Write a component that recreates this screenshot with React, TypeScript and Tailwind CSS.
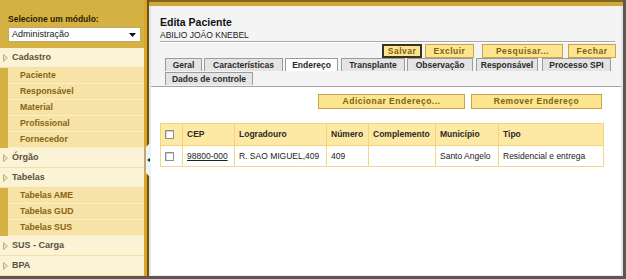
import React from 'react';
import clsx from 'clsx';

type MenuGroup = { title: string; items: string[] };

const menu: MenuGroup[] = [
  { title: 'Cadastro', items: ['Paciente', 'Responsável', 'Material', 'Profissional', 'Fornecedor'] },
  { title: 'Órgão', items: [] },
  { title: 'Tabelas', items: ['Tabelas AME', 'Tabelas GUD', 'Tabelas SUS'] },
  { title: 'SUS - Carga', items: [] },
  { title: 'BPA', items: [] },
];

const topButtons = [
  { label: 'Salvar', w: 'w-[40px]', ml: 'ml-0', focus: true },
  { label: 'Excluir', w: 'w-[49px]', ml: 'ml-[3px]', focus: false },
  { label: 'Pesquisar...', w: 'w-[81px]', ml: 'ml-[8px]', focus: false },
  { label: 'Fechar', w: 'w-[48px]', ml: 'ml-[5px]', focus: false },
];

const tabs = [
  { label: 'Geral', w: 'w-[37px]', ml: 'ml-0' },
  { label: 'Características', w: 'w-[79px]', ml: 'ml-[2px]' },
  { label: 'Endereço', w: 'w-[53px]', ml: 'ml-[2px]', active: true },
  { label: 'Transplante', w: 'w-[64px]', ml: 'ml-[3px]' },
  { label: 'Observação', w: 'w-[66px]', ml: 'ml-[2px]' },
  { label: 'Responsável', w: 'w-[62px]', ml: 'ml-[3px]' },
  { label: 'Processo SPI', w: 'w-[69px]', ml: 'ml-[4px]' },
];

const cols = [
  { key: 'chk', label: '', w: 'w-[22px]' },
  { key: 'cep', label: 'CEP', w: 'w-[52px]' },
  { key: 'log', label: 'Logradouro', w: 'w-[92px]' },
  { key: 'num', label: 'Número', w: 'w-[42px]' },
  { key: 'comp', label: 'Complemento', w: 'w-[67px]' },
  { key: 'mun', label: 'Município', w: 'w-[63px]' },
  { key: 'tipo', label: 'Tipo', w: 'w-[105px]' },
];

function Arrow() {
  return (
    <svg width="5" height="8" viewBox="0 0 5 8" className="shrink-0">
      <polygon points="0.5,0.5 4.5,4 0.5,7.5" fill="#e6e0b4" stroke="#bdb482" strokeWidth="1" />
    </svg>
  );
}

function Checkbox() {
  return <span className="block size-[9px] border border-[#8f8f8f] bg-white shadow-[inset_1px_1px_0_#d0d0d0]" />;
}

function Sidebar() {
  return (
    <aside className="relative flex w-[149px] shrink-0">
      <div className="flex w-[144px] flex-col bg-[#d5b043]">
        <div className="h-[48px] pl-[8px] pr-[3px] pt-[14px]">
          <div className="text-[8.5px] font-bold leading-[11px] text-[#2b1f00]">Selecione um módulo:</div>
          <div className="mt-[2px] flex h-[15px] items-center justify-between border border-[#c2a862] bg-white pl-[3px] pr-[4px] text-[9px] text-[#222]">
            <span>Administração</span>
            <svg width="7" height="4" viewBox="0 0 7 4">
              <polygon points="0,0 7,0 3.5,4" fill="#111" />
            </svg>
          </div>
        </div>
        <ul className="flex flex-1 flex-col bg-[#fcf3d6]">
          {menu.map((group) => (
            <li key={group.title} className="list-none">
              <div className="flex h-[20px] items-center gap-[4px] border-b border-[#f1e0a8] bg-[#fcf3d6] pl-[3px] text-[9px] font-bold text-[#57523f]">
                <Arrow />
                <span>{group.title}</span>
              </div>
              {group.items.length > 0 && (
                <div className="bg-[#d5b043] pl-[8px]">
                  {group.items.map((item) => (
                    <div
                      key={item}
                      className="flex h-[16px] items-center border-b border-[#fcefc6] bg-[#f8e3a6] pl-[12px] text-[8.7px] font-bold text-[#866318]"
                    >
                      {item}
                    </div>
                  ))}
                </div>
              )}
            </li>
          ))}
        </ul>
      </div>
      <div className="w-[3px] bg-[#dba52a]" />
      <div className="w-[2px] bg-[#6f5110]" />
      {/* collapse handle */}
      <div className="absolute left-[145px] top-[142px] flex h-[36px] w-[6px] items-center justify-center border-l border-[#a3aab0] bg-[#eef2f4] [clip-path:polygon(0_6px,100%_0,100%_100%,0_calc(100%-6px))]">
        <svg width="3" height="4" viewBox="0 0 3 4">
          <polygon points="3,0 3,4 0,2" fill="#1d2b3a" />
        </svg>
      </div>
    </aside>
  );
}

function GoldButton({ label, className, focus }: { label: string; className?: string; focus?: boolean }) {
  return (
    <button
      className={clsx(
        'flex items-center justify-center bg-[#fde58f] text-[8.5px] font-bold tracking-[0.5px] text-[#7e6116]',
        focus ? 'border-2 border-[#3b3320]' : 'border border-[#c9a44c]',
        className,
      )}
    >
      {label}
    </button>
  );
}

export default function App() {
  return (
    <div className="flex h-[279px] w-[626px] flex-col overflow-hidden bg-[#585858] font-['Liberation_Sans',Arial,sans-serif]">
      <div className="mb-[3px] mr-[3px] flex flex-1">
        <Sidebar />
        <main className="flex flex-1 flex-col border-b border-[#e9e9e9] bg-[#f4f4f4]">
          <div className="h-[6px] border-t-2 border-[#846521] bg-[#cfa937]" />
          <div className="flex flex-1 flex-col border-x-2 border-[#e4e4e4]">
            <div className="px-[9px] pt-[10px]">
              <h1 className="text-[10.5px] font-bold leading-[13px] text-[#111]">Edita Paciente</h1>
              <p className="mt-[1px] text-[8.5px] leading-[10px] text-[#222]">ABILIO JOÃO KNEBEL</p>
              <div className="mr-[-3px] mt-[1px] h-[1px] bg-[#a9a9a9] shadow-[0_1px_0_#ffffff]" />
            </div>
            <div className="mt-[2px] flex h-[14px] justify-end pr-[5px]">
              {topButtons.map((b) => (
                <GoldButton key={b.label} label={b.label} focus={b.focus} className={clsx('h-[14px]', b.w, b.ml)} />
              ))}
            </div>
            <div className="border-b border-[#a4a4a4] pb-[1px] pl-[14px]">
              <div className="flex h-[13px]">
                {tabs.map((t) => (
                  <div
                    key={t.label}
                    className={clsx(
                      'flex items-center justify-center border border-b-0 border-[#9c9c9c] text-[8.5px] font-bold text-[#2a2a2a]',
                      t.w,
                      t.ml,
                      t.active ? 'bg-white' : 'bg-[#e4e4e4]',
                    )}
                  >
                    {t.label}
                  </div>
                ))}
              </div>
              <div className="mt-[1px] flex h-[13px]">
                <div className="flex w-[88px] items-center justify-center border border-b-0 border-[#9c9c9c] bg-[#e4e4e4] text-[8.5px] font-bold text-[#2a2a2a]">
                  Dados de controle
                </div>
              </div>
            </div>
            <section className="flex-1 bg-white pt-[7px]">
              <div className="flex justify-end gap-[6px] pr-[19px]">
                <GoldButton label="Adicionar Endereço..." className="h-[15px] w-[147px]" />
                <GoldButton label="Remover Endereço" className="h-[15px] w-[131px]" />
              </div>
              <table className="ml-[9px] mt-[14px] w-[443px] table-fixed border-collapse whitespace-nowrap text-left text-[8.5px]">
                <thead>
                  <tr className="h-[22px] bg-[#fde9a4]">
                    {cols.map((c) => (
                      <th key={c.key} className={clsx('border border-[#f0d47f] px-[4px] font-bold text-[#2a2a2a]', c.w)}>
                        {c.key === 'chk' ? <Checkbox /> : c.label}
                      </th>
                    ))}
                  </tr>
                </thead>
                <tbody>
                  <tr className="h-[21px] text-[#222]">
                    <td className="border border-[#f1d987] px-[4px]"><Checkbox /></td>
                    <td className="border border-[#f1d987] px-[4px]"><a className="underline">98800-000</a></td>
                    <td className="border border-[#f1d987] px-[4px]">R. SAO MIGUEL,409</td>
                    <td className="border border-[#f1d987] px-[4px]">409</td>
                    <td className="border border-[#f1d987] px-[4px]"></td>
                    <td className="border border-[#f1d987] px-[4px]">Santo Angelo</td>
                    <td className="border border-[#f1d987] px-[4px]">Residencial e entrega</td>
                  </tr>
                </tbody>
              </table>
            </section>
          </div>
        </main>
      </div>
    </div>
  );
}
